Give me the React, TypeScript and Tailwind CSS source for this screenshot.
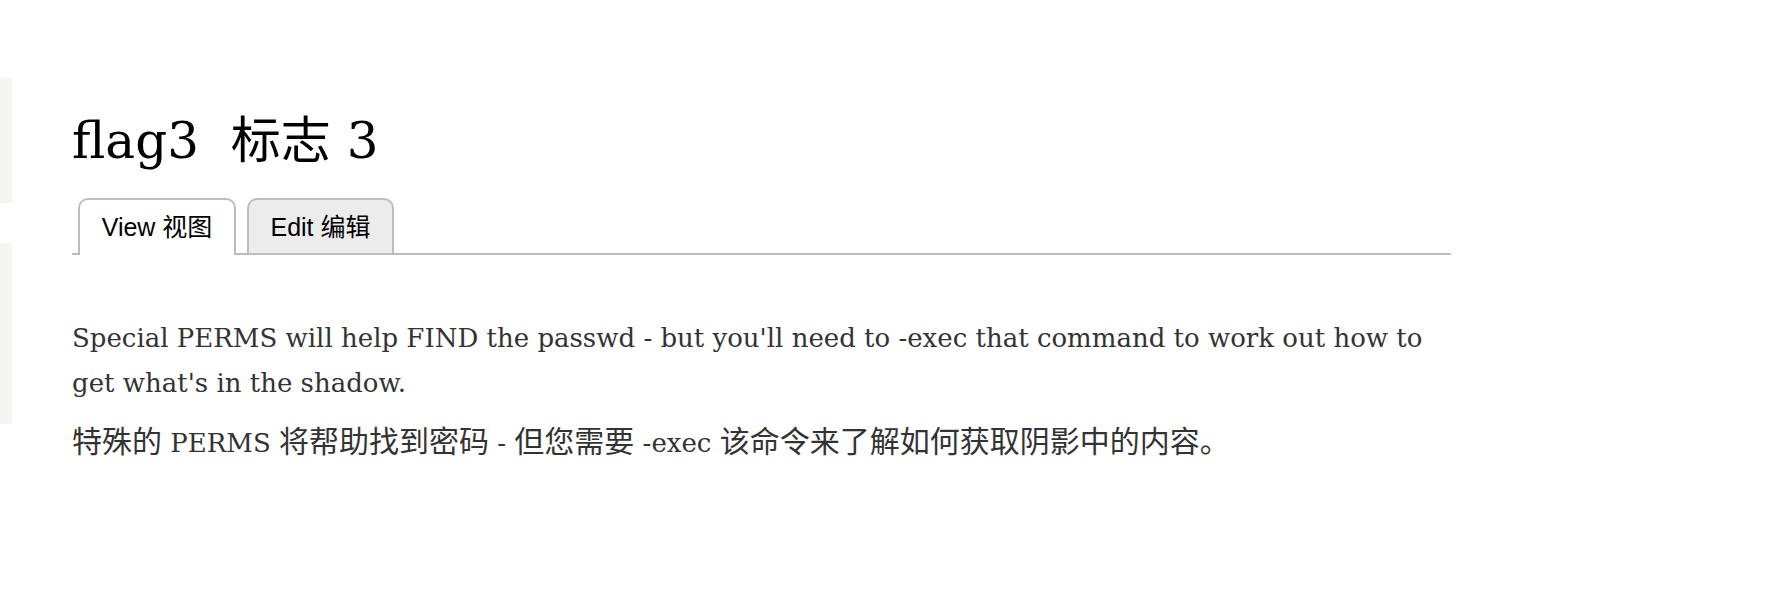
import React from "react";

const serif = { fontFamily: '"DejaVu Serif", "Noto Sans CJK SC", serif' };
const sans = { fontFamily: '"Liberation Sans", "Noto Sans CJK SC", sans-serif' };

function Cjk({ children }: { children: React.ReactNode }) {
  return <span className="text-[30px]">{children}</span>;
}

export default function App() {
  return (
    <div className="flex w-full h-[592px] bg-white overflow-hidden">
      <div className="flex flex-col w-[12px] shrink-0">
        <div className="mt-[78px] h-[125px] bg-[#f5f5f1]" />
        <div className="mt-[40px] h-[181px] bg-[#f5f5f1]" />
      </div>
      <main className="ml-[60px] w-[1379px] pt-[110px]">
        <h1 className="text-[50px] leading-[62px] text-black font-normal" style={serif}>
          flag3{"\u00a0 "}标志 3
        </h1>
        <nav className="mt-[26px] flex items-end border-b-2 border-[#bdbdbd] pl-[6px] gap-[11px]" style={sans}>
          <span className="relative -mb-[2px] w-[158px] h-[57px] pt-[10px] text-center bg-white border-2 border-b-0 border-[#bdbdbd] rounded-t-[10px] text-[25px] text-black leading-[34px]">
            View 视图
          </span>
          <span className="w-[147px] h-[55px] pt-[10px] text-center bg-[#ececec] border-2 border-b-0 border-[#bdbdbd] rounded-t-[10px] text-[25px] text-black leading-[34px]">
            Edit 编辑
          </span>
        </nav>
        <div className="mt-[61px] text-[26px] leading-[45px] text-[#333333]" style={serif}>
          <p>
            Special PERMS will help FIND the passwd - but you'll need to -exec that command to work out how to get what's in the shadow.
          </p>
          <p className="mt-[13px]">
            <Cjk>特殊的</Cjk> PERMS <Cjk>将帮助找到密码</Cjk> - <Cjk>但您需要</Cjk> -exec <Cjk>该命令来了解如何获取阴影中的内容。</Cjk>
          </p>
        </div>
      </main>
    </div>
  );
}
